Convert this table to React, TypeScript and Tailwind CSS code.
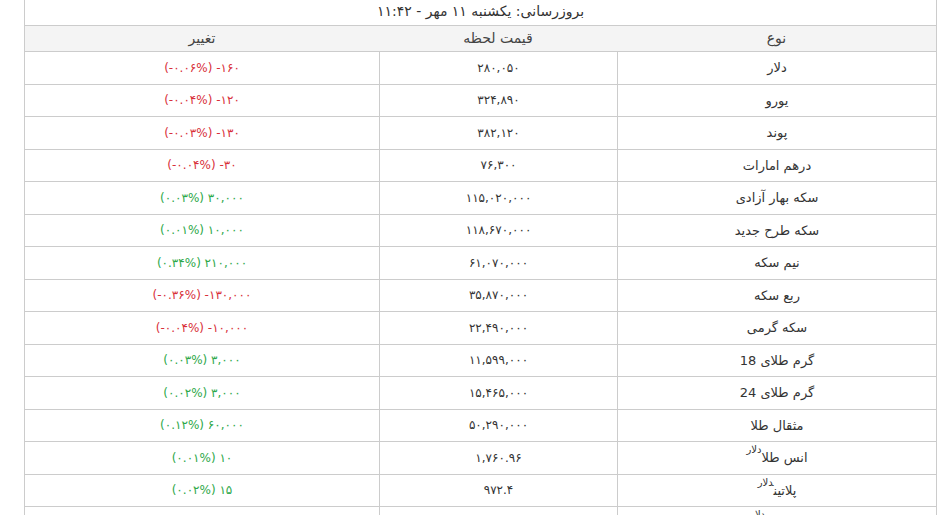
import React from 'react';

interface Rate {
    name: string;
    unit?: string;
    price: string;
    change: string;
    up: boolean;
}

const rates: Rate[] = [
    { name: 'دلار', price: '۲۸۰,۰۵۰', change: '(-۰.۰۶%) -۱۶۰', up: false },
    { name: 'یورو', price: '۳۲۴,۸۹۰', change: '(-۰.۰۴%) -۱۲۰', up: false },
    { name: 'پوند', price: '۳۸۲,۱۲۰', change: '(-۰.۰۳%) -۱۳۰', up: false },
    { name: 'درهم امارات', price: '۷۶,۳۰۰', change: '(-۰.۰۴%) -۳۰', up: false },
    { name: 'سکه بهار آزادی', price: '۱۱۵,۰۲۰,۰۰۰', change: '(۰.۰۳%) ۳۰,۰۰۰', up: true },
    { name: 'سکه طرح جدید', price: '۱۱۸,۶۷۰,۰۰۰', change: '(۰.۰۱%) ۱۰,۰۰۰', up: true },
    { name: 'نیم سکه', price: '۶۱,۰۷۰,۰۰۰', change: '(۰.۳۴%) ۲۱۰,۰۰۰', up: true },
    { name: 'ربع سکه', price: '۳۵,۸۷۰,۰۰۰', change: '(-۰.۳۶%) -۱۳۰,۰۰۰', up: false },
    { name: 'سکه گرمی', price: '۲۲,۴۹۰,۰۰۰', change: '(-۰.۰۴%) -۱۰,۰۰۰', up: false },
    { name: 'گرم طلای 18', price: '۱۱,۵۹۹,۰۰۰', change: '(۰.۰۳%) ۳,۰۰۰', up: true },
    { name: 'گرم طلای 24', price: '۱۵,۴۶۵,۰۰۰', change: '(۰.۰۲%) ۳,۰۰۰', up: true },
    { name: 'مثقال طلا', price: '۵۰,۲۹۰,۰۰۰', change: '(۰.۱۲%) ۶۰,۰۰۰', up: true },
    { name: 'انس طلا', unit: 'دلار', price: '۱,۷۶۰.۹۶', change: '(۰.۰۱%) ۱۰', up: true },
    { name: 'پلاتین', unit: 'دلار', price: '۹۷۲.۴', change: '(۰.۰۲%) ۱۵', up: true },
    { name: 'پالادیوم', unit: 'دلار', price: '۲,۰۳۵.۵', change: '(۰.۰۵%) ۱۰', up: true },
];

const cols = 'grid grid-cols-[319px_238px_354px]';

const App = () => {
    return (
        <div className="bg-white pl-[24px] pr-[14px] text-[#333]" style={{ fontFamily: '"DejaVu Sans", Tahoma, sans-serif' }}>
            <div dir="rtl" className="w-[913px] border-x border-[#ccc]">
                <div className="h-[26px] border-b border-[#ccc] flex items-center justify-center text-[14px] pb-[3px]">
                    بروزرسانی: یکشنبه ۱۱ مهر - ۱۱:۴۲
                </div>

                <div className={`${cols} h-[26px] bg-[#f4f4f4] border-b border-[#ccc] text-[14px] text-[#444]`}>
                    <div className="flex items-center justify-center">نوع</div>
                    <div className="flex items-center justify-center">قیمت لحظه</div>
                    <div className="flex items-center justify-center">تغییر</div>
                </div>

                {rates.map(rate => (
                    <div key={rate.name} className={`${cols} h-[32.5px] border-b border-[#ccc]`}>
                        <div className="flex items-center justify-center text-[13px] border-l border-[#ccc]">
                            <span>
                                {rate.name}
                                {rate.unit && <sup className="text-[10px] top-[-9px]">{rate.unit}</sup>}
                            </span>
                        </div>
                        <div className="flex items-center justify-center text-[12px] border-l border-[#ccc]">
                            <span dir="ltr">{rate.price}</span>
                        </div>
                        <div className={`flex items-center justify-center text-[12px] ${rate.up ? 'text-[#2ea84a]' : 'text-[#d8303a]'}`}>
                            <span dir="ltr">{rate.change}</span>
                        </div>
                    </div>
                ))}
            </div>
        </div>
    );
};

export default App;
